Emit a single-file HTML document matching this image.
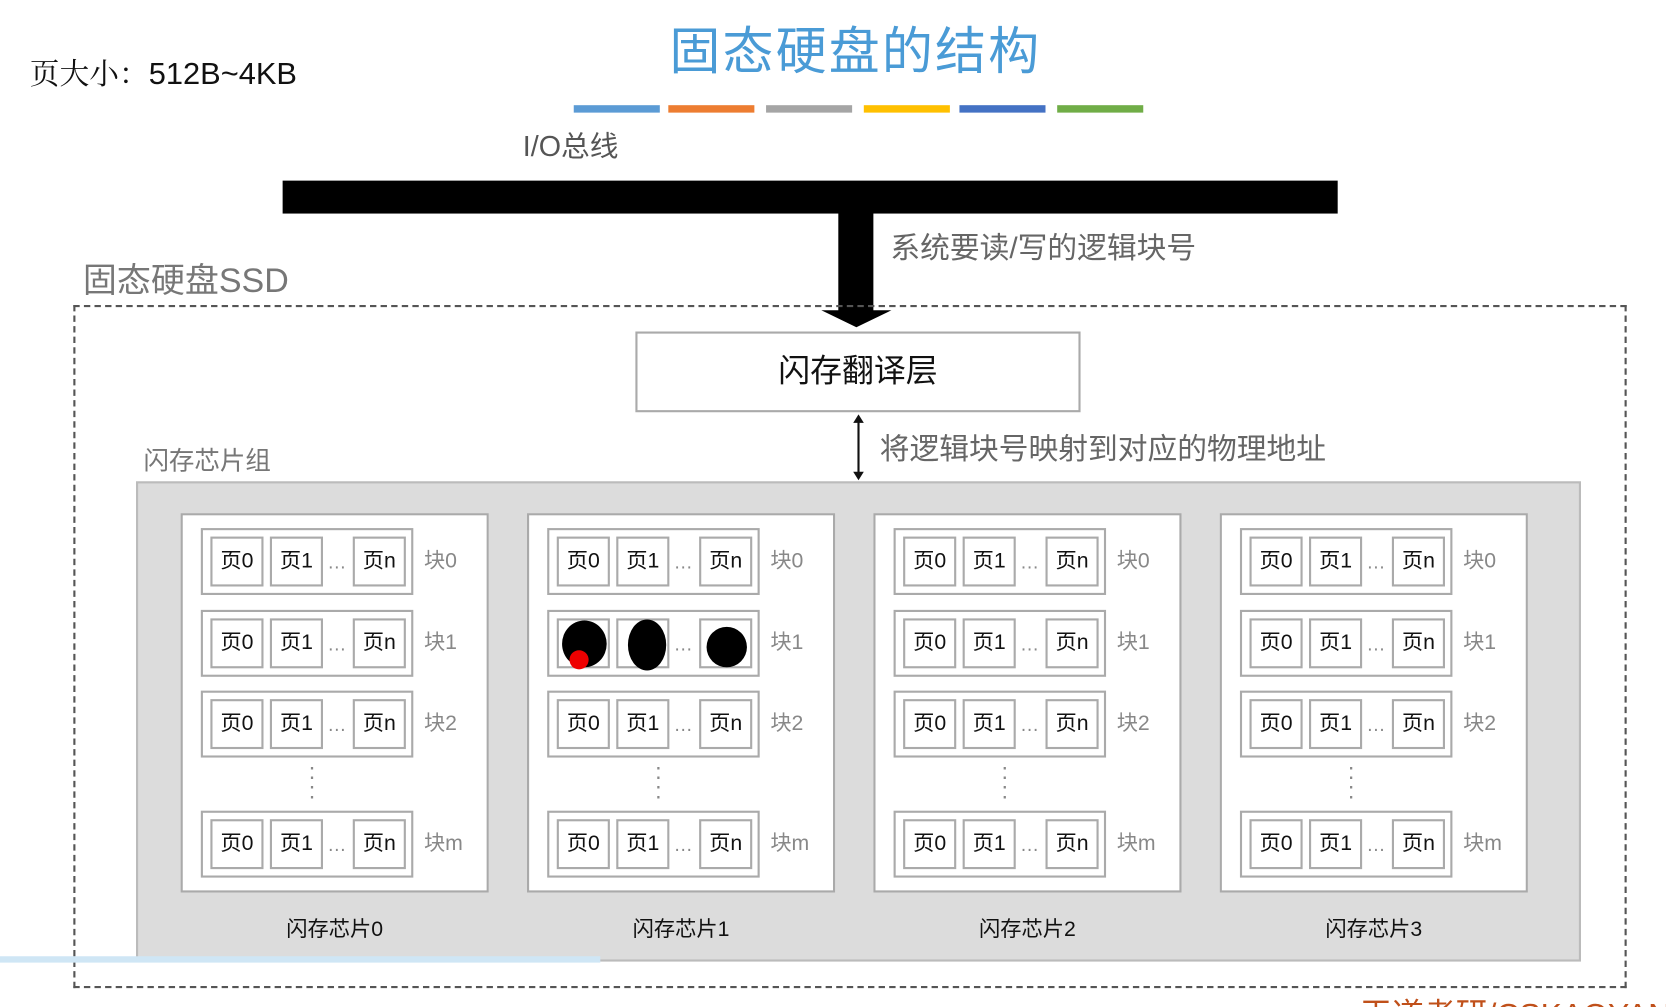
<!DOCTYPE html>
<html><head><meta charset="utf-8"><style>
html,body{margin:0;padding:0;background:#fff;overflow:hidden;width:1666px;height:1007px}
#w{position:relative;width:1568px;height:948px;transform:scale(1.0625);transform-origin:0 0;font-family:"Liberation Sans","Noto Sans CJK SC",sans-serif}
.a{position:absolute;white-space:nowrap}
.chip{position:absolute;top:483px;width:290px;height:357px;background:#fff;border:2px solid #aaa;box-sizing:border-box}
.blk{position:absolute;left:17px;width:200px;height:63px;border:2px solid #aaa;box-sizing:border-box;background:#fff}
.pg{position:absolute;top:6px;width:50px;height:47px;border:2px solid #aaa;box-sizing:border-box;font-size:20px;line-height:43px;text-align:center;color:#111}
.dots{position:absolute;left:117px;top:10px;font-size:18px;color:#888;line-height:40px}
.bl{position:absolute;left:227px;font-size:20px;color:#888;line-height:63px}
.vd{position:absolute;left:118px;top:232px;font-size:22px;color:#888;line-height:9px;width:10px}
.cl{position:absolute;top:858px;font-size:20px;color:#111;width:290px;text-align:center}
</style></head><body><div id="w">
<div class="a" style="left:28px;top:48px;font-size:28px;color:#111;font-family:'Noto Serif CJK SC','Liberation Sans',serif">页大小：<span style="font-family:'Liberation Sans',sans-serif;font-size:29px">512B~4KB</span></div>
<div class="a" style="left:630px;top:9px;font-size:48px;color:#4a9bd6;letter-spacing:2px">固态硬盘的结构</div>
<div class="a" style="left:540px;top:99px;width:81px;height:7px;background:#5b9bd5"></div>
<div class="a" style="left:629px;top:99px;width:81px;height:7px;background:#ed7d31"></div>
<div class="a" style="left:721px;top:99px;width:81px;height:7px;background:#a5a5a5"></div>
<div class="a" style="left:813px;top:99px;width:81px;height:7px;background:#ffc000"></div>
<div class="a" style="left:903px;top:99px;width:81px;height:7px;background:#4472c4"></div>
<div class="a" style="left:995px;top:99px;width:81px;height:7px;background:#70ad47"></div>
<div class="a" style="left:492px;top:116px;font-size:27px;color:#555">I/O总线</div>
<div class="a" style="left:266px;top:170px;width:993px;height:31px;background:#000"></div>
<div class="a" style="left:789px;top:200px;width:33px;height:93px;background:#000"></div>
<svg class="a" style="left:770px;top:290px" width="72" height="20"><polygon points="3,2 69,2 36,18" fill="#000"/></svg>
<div class="a" style="left:838px;top:212px;font-size:28px;color:#666">系统要读/写的逻辑块号</div>
<div class="a" style="left:78px;top:239px;font-size:32px;color:#777">固态硬盘SSD</div>
<div class="a" style="left:69px;top:287px;width:1462px;height:643px;border:2px dashed #555;box-sizing:border-box"></div>
<div class="a" style="left:598px;top:312px;width:419px;height:76px;border:2px solid #aaa;box-sizing:border-box;font-size:30px;line-height:72px;text-align:center;color:#111;background:#fff">闪存翻译层</div>
<svg class="a" style="left:800px;top:389px" width="16" height="64"><line x1="8" y1="4" x2="8" y2="60" stroke="#111" stroke-width="2"/><polygon points="3,9 8,1 13,9" fill="#111"/><polygon points="3,55 8,63 13,55" fill="#111"/></svg>
<div class="a" style="left:828px;top:401px;font-size:28px;color:#666">将逻辑块号映射到对应的物理地址</div>
<div class="a" style="left:135px;top:414px;font-size:24px;color:#777">闪存芯片组</div>
<div class="a" style="left:128px;top:453px;width:1360px;height:452px;background:#dcdcdc;border:2px solid #bbb;box-sizing:border-box"></div>
<div class="a" style="left:0;top:900px;width:565px;height:6px;background:#cfe6f5"></div>

<div class="chip" style="left:170px">
 <div class="blk" style="top:12px"><div class="pg" style="left:7px">页0</div><div class="pg" style="left:63px">页1</div><div class="dots">…</div><div class="pg" style="left:141px">页n</div></div><div class="bl" style="top:12px">块0</div>
 <div class="blk" style="top:89px"><div class="pg" style="left:7px">页0</div><div class="pg" style="left:63px">页1</div><div class="dots">…</div><div class="pg" style="left:141px">页n</div></div><div class="bl" style="top:89px">块1</div>
 <div class="blk" style="top:165px"><div class="pg" style="left:7px">页0</div><div class="pg" style="left:63px">页1</div><div class="dots">…</div><div class="pg" style="left:141px">页n</div></div><div class="bl" style="top:165px">块2</div>
 <div class="vd">·<br>·<br>·<br>·</div>
 <div class="blk" style="top:278px"><div class="pg" style="left:7px">页0</div><div class="pg" style="left:63px">页1</div><div class="dots">…</div><div class="pg" style="left:141px">页n</div></div><div class="bl" style="top:278px">块m</div>
</div>
<div class="chip" style="left:496px">
 <div class="blk" style="top:12px"><div class="pg" style="left:7px">页0</div><div class="pg" style="left:63px">页1</div><div class="dots">…</div><div class="pg" style="left:141px">页n</div></div><div class="bl" style="top:12px">块0</div>
 <div class="blk" style="top:89px"><div class="pg" style="left:7px"></div><div class="pg" style="left:63px"></div><div class="dots">…</div><div class="pg" style="left:141px"></div>
  <svg style="position:absolute;left:0;top:0" width="200" height="63"><ellipse cx="33" cy="30" rx="21" ry="22" fill="#000"/><circle cx="28" cy="45" r="9" fill="#e00"/><ellipse cx="92" cy="31" rx="18" ry="24" fill="#000"/><ellipse cx="167" cy="33" rx="19" ry="19" fill="#000"/></svg></div><div class="bl" style="top:89px">块1</div>
 <div class="blk" style="top:165px"><div class="pg" style="left:7px">页0</div><div class="pg" style="left:63px">页1</div><div class="dots">…</div><div class="pg" style="left:141px">页n</div></div><div class="bl" style="top:165px">块2</div>
 <div class="vd">·<br>·<br>·<br>·</div>
 <div class="blk" style="top:278px"><div class="pg" style="left:7px">页0</div><div class="pg" style="left:63px">页1</div><div class="dots">…</div><div class="pg" style="left:141px">页n</div></div><div class="bl" style="top:278px">块m</div>
</div>
<div class="chip" style="left:822px">
 <div class="blk" style="top:12px"><div class="pg" style="left:7px">页0</div><div class="pg" style="left:63px">页1</div><div class="dots">…</div><div class="pg" style="left:141px">页n</div></div><div class="bl" style="top:12px">块0</div>
 <div class="blk" style="top:89px"><div class="pg" style="left:7px">页0</div><div class="pg" style="left:63px">页1</div><div class="dots">…</div><div class="pg" style="left:141px">页n</div></div><div class="bl" style="top:89px">块1</div>
 <div class="blk" style="top:165px"><div class="pg" style="left:7px">页0</div><div class="pg" style="left:63px">页1</div><div class="dots">…</div><div class="pg" style="left:141px">页n</div></div><div class="bl" style="top:165px">块2</div>
 <div class="vd">·<br>·<br>·<br>·</div>
 <div class="blk" style="top:278px"><div class="pg" style="left:7px">页0</div><div class="pg" style="left:63px">页1</div><div class="dots">…</div><div class="pg" style="left:141px">页n</div></div><div class="bl" style="top:278px">块m</div>
</div>
<div class="chip" style="left:1148px">
 <div class="blk" style="top:12px"><div class="pg" style="left:7px">页0</div><div class="pg" style="left:63px">页1</div><div class="dots">…</div><div class="pg" style="left:141px">页n</div></div><div class="bl" style="top:12px">块0</div>
 <div class="blk" style="top:89px"><div class="pg" style="left:7px">页0</div><div class="pg" style="left:63px">页1</div><div class="dots">…</div><div class="pg" style="left:141px">页n</div></div><div class="bl" style="top:89px">块1</div>
 <div class="blk" style="top:165px"><div class="pg" style="left:7px">页0</div><div class="pg" style="left:63px">页1</div><div class="dots">…</div><div class="pg" style="left:141px">页n</div></div><div class="bl" style="top:165px">块2</div>
 <div class="vd">·<br>·<br>·<br>·</div>
 <div class="blk" style="top:278px"><div class="pg" style="left:7px">页0</div><div class="pg" style="left:63px">页1</div><div class="dots">…</div><div class="pg" style="left:141px">页n</div></div><div class="bl" style="top:278px">块m</div>
</div>
<div class="cl" style="left:170px">闪存芯片0</div>
<div class="cl" style="left:496px">闪存芯片1</div>
<div class="cl" style="left:822px">闪存芯片2</div>
<div class="cl" style="left:1148px">闪存芯片3</div>
<div class="a" style="left:1280px;top:930px;font-size:30px;color:#c0501a">王道考研/CSKAOYAN</div>
</div></body></html>
